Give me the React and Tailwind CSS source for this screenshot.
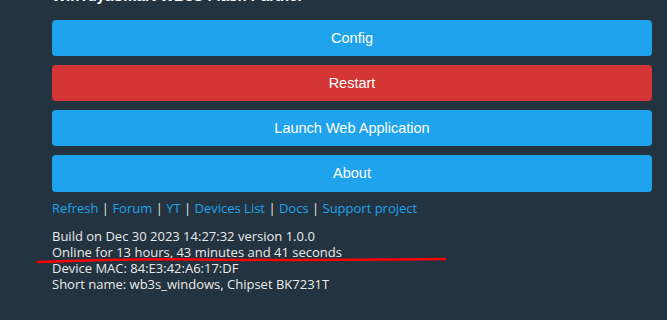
export default function App() {
  const links = ["Refresh", "Forum", "YT", "Devices List", "Docs", "Support project"];
  return (
    <div className="relative w-[667px] h-[320px] overflow-hidden bg-[#233340]" style={{ fontFamily: '"Open Sans", Verdana, sans-serif' }}>
      <div className="pl-[52px] w-[652px]">
        <div className="h-[20px] overflow-hidden relative">
          <div className="absolute left-0 top-[-13px] text-white font-bold text-[15px] leading-[18px] whitespace-nowrap" style={{ fontFamily: '"Liberation Sans", Arial, sans-serif' }}>
            WinTuyaSmart WB3S Flash Partner
          </div>
        </div>
        <div className="flex flex-col gap-[9px] text-[14.5px]" style={{ fontFamily: '"Liberation Sans", Arial, sans-serif' }}>
          <div className="h-[36px] pt-[1px] rounded-[4px] bg-[#1fa3ec] text-white flex items-center justify-center">Config</div>
          <div className="h-[36px] pt-[1px] rounded-[4px] bg-[#d43535] text-white flex items-center justify-center">Restart</div>
          <div className="h-[36px] pt-[1px] rounded-[4px] bg-[#1fa3ec] text-white flex items-center justify-center">Launch Web Application</div>
          <div className="h-[37px] pt-[1px] rounded-[4px] bg-[#1fa3ec] text-white flex items-center justify-center">About</div>
        </div>
        <div className="mt-[8px] text-[13px] leading-[16px] text-[#1fa3ec] whitespace-nowrap">
          {links.map((l, i) => (
            <span key={l}>
              {i > 0 && <span className="text-[#e8e8e8]"> | </span>}
              <span>{l}</span>
            </span>
          ))}
        </div>
        <div className="mt-[12px] text-[13px] leading-[16px] text-[#eaeaea] whitespace-nowrap">
          <div>Build on Dec 30 2023 14:27:32 version 1.0.0</div>
          <div>Online for 13 hours, 43 minutes and 41 seconds</div>
          <div>Device MAC: 84:E3:42:A6:17:DF</div>
          <div>Short name: wb3s_windows, Chipset BK7231T</div>
        </div>
      </div>
      <svg className="absolute left-0 top-0 pointer-events-none" width="667" height="320">
        <path d="M38 262 Q 120 258.5 200 259.5 T 445 259" stroke="#ff0000" strokeWidth="2.5" fill="none" strokeLinecap="round" />
      </svg>
    </div>
  );
}
